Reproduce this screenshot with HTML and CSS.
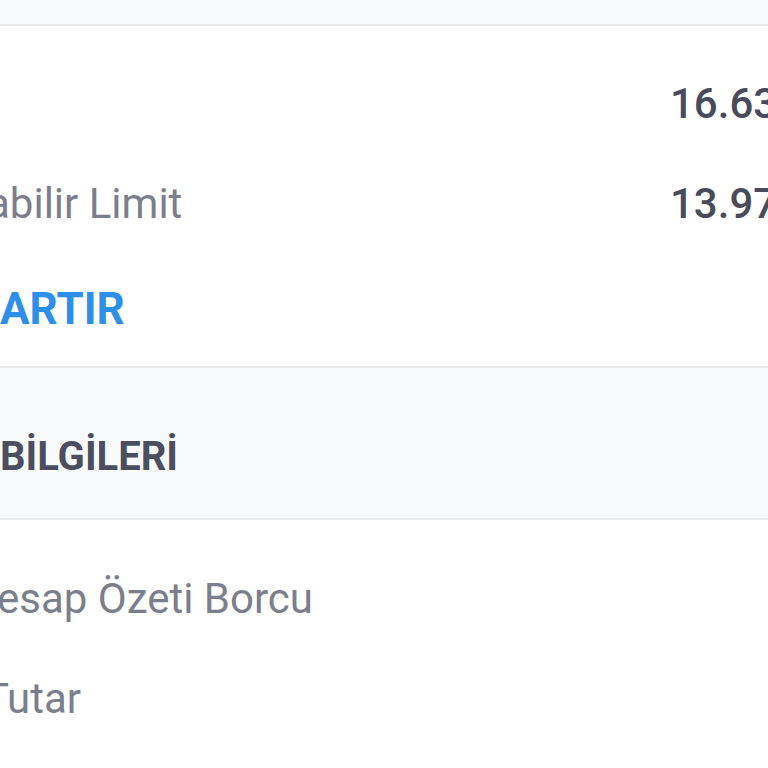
FILE: index.html
```html
<!DOCTYPE html>
<html lang="tr">
<head>
    <meta charset="UTF-8">
    <meta name="viewport" content="width=device-width, initial-scale=1.0">
    <title>Limit Bilgileri</title>
    <link rel="stylesheet" href="styles.css">
</head>
<body>
    <div class="top-band"></div>

    <section class="card">
        <div class="row">
            <div class="label"></div>
            <div class="value">16.63</div>
        </div>
        <div class="row">
            <div class="label label-limit">abilir Limit</div>
            <div class="value">13.97</div>
        </div>
        <div class="action">ARTIR</div>
    </section>

    <div class="section-head">BİLGİLERİ</div>

    <section class="card list">
        <div class="row">
            <div class="label label-debt">esap Özeti Borcu</div>
        </div>
        <div class="row">
            <div class="label label-amount">Tutar</div>
        </div>
    </section>
</body>
</html>
```

FILE: styles.css
```css
* {
    margin: 0;
    padding: 0;
    box-sizing: border-box;
    font-family: Roboto, "Noto Sans", Arial, sans-serif;
}

body {
    width: 768px;
    height: 768px;
    background-color: #fff;
    overflow: hidden;
}

.top-band {
    height: 26px;
    background: #f8f9fb;
    border-bottom: 2px solid #e6e8ec;
}

.card {
    background: #fff;
    padding-top: 28px;
}

.row {
    display: flex;
    height: 100px;
    line-height: 100px;
    font-size: 42px;
    white-space: nowrap;
}

.label {
    flex: 1;
    color: #7b7e8b;
    font-weight: 400;
}

/* the screen is cropped on the left, so the labels start off-edge */
.label-limit {
    margin-left: -13px;
}

.label-debt {
    margin-left: -3px;
}

.label-amount {
    margin-left: -16px;
}

.value {
    width: 98px;
    flex-shrink: 0;
    color: #474b5c;
    font-weight: 500;
}

.action {
    height: 112px;
    line-height: 100px;
    padding-top: 5px;
    font-size: 44px;
    font-weight: 700;
    color: #2d8fe8;
    white-space: nowrap;
}

.section-head {
    height: 154px;
    padding-top: 39px;
    line-height: 100px;
    font-size: 40px;
    font-weight: 700;
    color: #4a4e60;
    background: #f8f9fb;
    border-top: 2px solid #e6e8ec;
    border-bottom: 2px solid #e6e8ec;
    white-space: nowrap;
}

.list {
    padding-top: 29px;
}
```
